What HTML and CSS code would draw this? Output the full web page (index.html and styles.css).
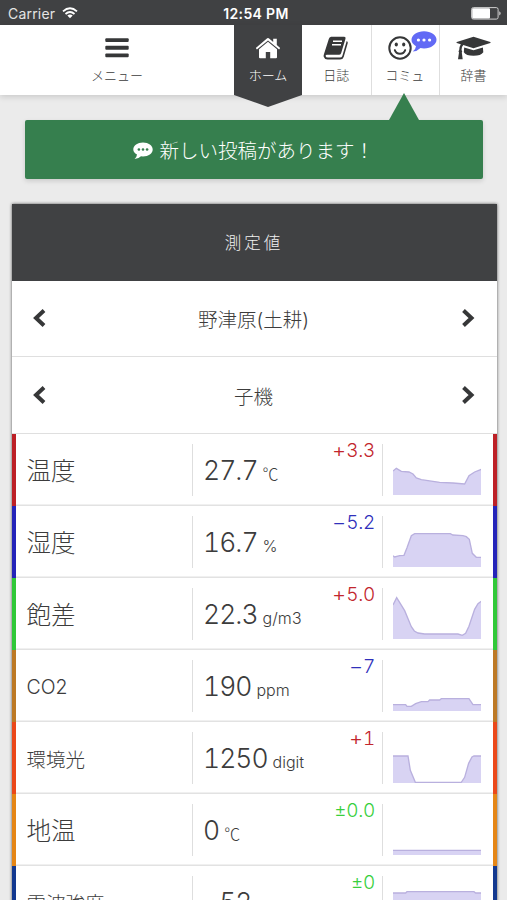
FILE: index.html
```html
<!DOCTYPE html>
<html lang="ja">
<head>
<meta charset="utf-8">
<title>測定値</title>
<link rel="stylesheet" href="styles.css">
</head>
<body>
<div class="status">
  <div class="carrier"><span>Carrier</span>
    <svg width="16" height="12" viewBox="0 0 16 12"><g fill="none" stroke="#fff" stroke-width="1.8"><path d="M1 4.3Q8 -1.9 15 4.3"/><path d="M3.5 7Q8 3 12.500 7"/></g><path d="M8 11.300 5.300 8.500Q8 6.300 10.700 8.500z" fill="#fff"/></svg>
  </div>
  <div class="clock">12:54 PM</div>
  <svg class="battery" width="31" height="13" viewBox="0 0 31 13"><rect x=".6" y=".6" width="26.500" height="11.500" rx="1.800" fill="none" stroke="#cfcfcf"/><rect x="1.200" y="1.200" width="17.800" height="10.300" rx="1" fill="#fff"/><path d="M28.300 4.200Q31 6.300 28.300 8.500z" fill="#ddd"/></svg>
</div>
<nav class="nav">
  <a class="tab menu"><svg width="24" height="24" viewBox="0 0 24 24" fill="#363738"><rect x=".3" y="2.200" width="23.400" height="3.900" rx="1"/><rect x=".3" y="9.800" width="23.400" height="3.900" rx="1"/><rect x=".3" y="17.400" width="23.400" height="3.900" rx="1"/></svg><span>メニュー</span></a>
  <a class="tab active"><svg width="26" height="24" viewBox="0 0 26 24" fill="#fff"><path d="M13 5.800 22 13.200V21.200Q22 22.200 21 22.200H15.200V16H10.800V22.200H5Q4 22.200 4 21.200V13.200z"/><path d="M.8 12 11.600 2.700Q13 1.500 14.400 2.700L18.200 6V2.800H21.800V9.100L25.200 12 24.100 13.400 13 4.400 1.900 13.400z"/></svg><span>ホーム</span></a>
  <a class="tab"><svg width="26" height="24" viewBox="0 0 26 24" fill="#363738"><path d="M8.100 .7H21.200Q23 .8 22.500 2.800L18.100 17.300Q17.500 18.800 16 18.800H4Q2.600 18.800 2.600 20 2.800 21.500 5 21.500H17Q18.800 21.500 19.300 20L23.700 4.900Q25.200 5.600 24.700 7.300L20.700 20.900Q19.800 23.600 17 23.600H4.500Q1.500 23.400 .7 20.700 .4 19.500 1 18L5.800 3Q6.300 1.100 8.100 .7z"/><path d="M10 5.300H19M9 8.700H18" stroke="#fff" stroke-width="1.500"/></svg><span>日誌</span></a>
  <a class="tab"><svg width="24" height="24" viewBox="0 0 24 24"><circle cx="12" cy="12" r="10.700" fill="none" stroke="#363738" stroke-width="2"/><ellipse cx="8.300" cy="8.600" rx="1.600" ry="2" fill="#363738"/><ellipse cx="15.700" cy="8.600" rx="1.600" ry="2" fill="#363738"/><path d="M6.800 14.100Q8 17.700 12 17.700T17.200 14.100" fill="none" stroke="#363738" stroke-width="1.900" stroke-linecap="round"/></svg><span>コミュ</span>
    <svg class="bubble" width="26" height="22" viewBox="0 0 26 22"><path d="M13 .2C20 .2 25.500 4 25.500 8.800S20 17.400 13 17.400Q11 17.400 9.500 17Q6.300 20.300 1.800 20.500 4.800 18 5 15.200 .5 12.800 .5 8.800C.5 4 6 .2 13 .2z" fill="#626af5"/><g fill="#fff"><circle cx="7.400" cy="9" r="1.600"/><circle cx="13" cy="9" r="1.600"/><circle cx="18.600" cy="9" r="1.600"/></g></svg></a>
  <a class="tab"><svg width="35" height="24" viewBox="0 0 35 24" fill="#363738"><path d="M17.500 .8 34.300 6.100Q35 6.500 34.300 7L17.500 12.200 7.300 9Q5.600 10.300 5.500 14 6.800 15 5.800 16.600L6.700 23.300H2L3 16.600Q1.900 15 3.200 14 3.300 10.400 4.800 8.200L.8 7Q0 6.500 .8 6.100z"/><path d="M8.200 11.400 17.500 14.300 26.900 11.400 27.300 16.200Q25 19.800 17.500 19.800T7.800 16.200z"/></svg><span>辞書</span></a>
</nav>
<main>
  <div class="notice"><svg width="20" height="18" viewBox="0 0 20 18"><path d="M10 .5C15.500 .5 19.700 3.500 19.700 7.500S15.500 14.400 10 14.400L8 14.300Q5.400 16.900 1.600 17.100 3.800 15.200 4 12.600 .3 10.700 .3 7.500C.3 3.500 4.500 .5 10 .5z" fill="#fff"/><g fill="#367f4e"><circle cx="5.900" cy="7.500" r="1.300"/><circle cx="10" cy="7.500" r="1.300"/><circle cx="14.100" cy="7.500" r="1.300"/></g></svg><span>新しい投稿があります！</span></div>
  <section class="card">
    <h1>測定値</h1>
    <div class="picker"><svg width="14" height="20" viewBox="0 0 14 20"><path d="M12 2.500 4 10 12 17.500"/></svg><span>野津原(土耕)</span><svg width="14" height="20" viewBox="0 0 14 20"><path d="M2.500 2.500 10.500 10 2.500 17.500"/></svg></div>
    <div class="picker"><svg width="14" height="20" viewBox="0 0 14 20"><path d="M12 2.500 4 10 12 17.500"/></svg><span>子機</span><svg width="14" height="20" viewBox="0 0 14 20"><path d="M2.500 2.500 10.500 10 2.500 17.500"/></svg></div>

    <div class="row red"><div class="name">温度</div><div class="reading"><b>27.7</b><i class="celsius">℃</i><em class="up"><s>+</s>3.3</em></div><svg class="chart" viewBox="0 0 265 153"><path d="M0 153V81L10 73 25 82 48 84 60 90 70 102 85 107 105 110 140 115 180 117 215 120 228 95 245 84 265 76V153z"/><polyline points="0,81 10,73 25,82 48,84 60,90 70,102 85,107 105,110 140,115 180,117 215,120 228,95 245,84 265,76"/></svg></div>
    <div class="row blue"><div class="name">湿度</div><div class="reading"><b>16.7</b><i>%</i><em class="down"><s>−</s>5.2</em></div><svg class="chart" viewBox="0 0 265 153"><path d="M0 153V119L5 123 20 119 33 118 42 95 55 59 65 53H172L180 57 210 59 220 62 229 70 238 112 250 124H265V153z"/><polyline points="0,119 5,123 20,119 33,118 42,95 55,59 65,53 172,53 180,57 210,59 220,62 229,70 238,112 250,124 265,124"/></svg></div>
    <div class="row green"><div class="name">飽差</div><div class="reading"><b>22.3</b><i>g/m3</i><em class="up"><s>+</s>5.0</em></div><svg class="chart" viewBox="0 0 265 153"><path d="M0 153V51L11 29 35 68 55 116 64 129 75 135 95 138H195L208 142 218 136 228 115 245 64 255 47 265 40V153z"/><polyline points="0,51 11,29 35,68 55,116 64,129 75,135 95,138 195,138 208,142 218,136 228,115 245,64 255,47 265,40"/></svg></div>
    <div class="row brown"><div class="name small">CO2</div><div class="reading"><b>190</b><i>ppm</i><em class="down"><s>−</s>7</em></div><svg class="chart" viewBox="0 0 265 153"><path d="M0 153V134H38L42 139H55L68 131 85 125H105L110 120H140L145 116H228L240 134H265V153z"/><polyline points="0,134 38,134 42,139 55,139 68,131 85,125 105,125 110,120 140,120 145,116 228,116 240,134 265,134"/></svg></div>
    <div class="row orange"><div class="name small">環境光</div><div class="reading"><b>1250</b><i>digit</i><em class="up"><s>+</s>1</em></div><svg class="chart" viewBox="0 0 265 153"><path d="M0 153V72H45L52 115 67 153H205L215 136 227 94 237 75 243 72H265V153z"/><polyline points="0,72 45,72 52,115 67,151 205,151 215,136 227,94 237,75 243,72 265,72"/></svg></div>
    <div class="row amber"><div class="name">地温</div><div class="reading"><b>0</b><i class="celsius">℃</i><em class="same">±0.0</em></div><svg class="chart" viewBox="0 0 265 153"><path d="M0 153V139H265V153z"/><polyline points="0,139 265,139"/></svg></div>
    <div class="row navy"><div class="name small">電波強度</div><div class="reading"><b>-52</b><em class="same">±0</em></div><svg class="chart" viewBox="0 0 265 153"><path d="M0 153V51H38L42 47H243L248 51H265V153z"/><polyline points="0,51 38,51 42,47 243,47 248,51 265,51"/></svg></div>
  </section>
</main>
</body>
</html>
```
FILE: styles.css
```css
* { box-sizing: border-box; }
body {
  margin: 0;
  height: 900px;
  overflow: hidden;
  background: #ebebeb;
  color: #3c3c3c;
  font-family: Inter, "Noto Sans CJK JP", sans-serif;
  font-weight: 300;
}
.status {
  height: 25px;
  padding: 1px 5px 0 8px;
  background: #404143;
  color: #fff;
  display: grid;
  grid-template-columns: 1fr auto 1fr;
  align-items: center;
  font-size: 14px;
}
.carrier { display: flex; align-items: center; gap: 7px; font-weight: 400; color: #e4e4e4; letter-spacing: .2px; }
.clock { font-weight: 600; font-size: 14px; letter-spacing: .35px; margin-left: 2px; }
.battery { justify-self: end; }
.nav {
  position: relative;
  height: 70px;
  display: grid;
  grid-template-columns: 234px 68px 68.500px 68.500px 68px;
  grid-template-rows: 70px;
  background: #fff;
  box-shadow: 0 2px 6px rgba(0, 0, 0, .14);
}
.tab {
  display: flex;
  flex-direction: column;
  align-items: center;
  position: relative;
  padding-top: 10.500px;
  border-left: 1px solid #dedede;
  font-size: 13px;
  line-height: 18px;
}
.tab svg { flex: none; }
.tab span { margin-top: 6px; }
.tab.menu { border-left: 0; }
.tab:nth-child(3) { border-left: 0; }
.tab.active {
  height: 82px;
  border: 0;
  background: #404143;
  color: #fff;
  clip-path: polygon(0 0, 100% 0, 100% 70px, 50% 100%, 0 70px);
}
.tab .bubble { position: absolute; left: 39px; top: 6px; }
.tab:nth-child(4) > svg:first-child { margin-right: 10px; }
.tab:nth-child(4) span { margin-right: 1px; }
main { padding: 24.500px 10.500px 0 11.500px; }
.notice {
  position: relative;
  z-index: 2;
  height: 59.500px;
  margin: 0 14px 25px 13.500px;
  border-radius: 2px;
  background: #367f4e;
  color: #fff;
  display: flex;
  align-items: center;
  justify-content: center;
  gap: 6px;
  font-size: 19.500px;
  box-shadow: 0 2px 5px rgba(0, 0, 0, .14);
}
.notice svg { position: relative; top: 2px; }
.notice::before {
  content: "";
  position: absolute;
  left: 364px;
  bottom: 100%;
  border: solid transparent;
  border-width: 0 15px 27px;
  border-bottom-color: #367f4e;
}
.card { background: #fff; box-shadow: 0 0 3px rgba(0, 0, 0, .65); }
h1 {
  margin: 0;
  height: 76.500px;
  padding-bottom: 1px;
  background: #404143;
  color: #f0f0f0;
  display: flex;
  align-items: center;
  justify-content: center;
  font-size: 16.500px;
  font-weight: 300;
  letter-spacing: 3px;
}
.picker {
  height: 76.800px;
  padding: 0 21px 0 20px;
  display: flex;
  align-items: center;
  justify-content: space-between;
  border-bottom: 1px solid #dfdfdf;
  font-size: 19.500px;
}
.picker path { fill: none; stroke: #363738; stroke-width: 4; }
.row {
  height: 72.050px;
  padding: 9.500px 11px 10px;
  display: grid;
  grid-template-columns: 165.500px 191px 88.500px;
  border: solid var(--tone);
  border-width: 0 4px;
  box-shadow: inset 0 -1.500px #e2e2e2;
}
.red { --tone: #bd2026; }
.blue { --tone: #2424b9; }
.green { --tone: #30c838; }
.brown { --tone: #bd7925; }
.orange { --tone: #eb481a; }
.amber { --tone: #e58616; }
.navy { --tone: #12388f; }
.name { display: flex; align-items: center; padding-bottom: 1px; font-size: 24.500px; }
.name.small { padding: 1px 0 0; font-size: 19.500px; }
.reading {
  position: relative;
  height: 52px;
  padding-left: 10px;
  border: solid #dedede;
  border-width: 0 1px;
  line-height: 53px;
  white-space: nowrap;
  font-variant-numeric: tabular-nums;
}
.reading b { font-size: 26.500px; font-weight: 300; letter-spacing: -1px; }
.reading i { margin-left: 5px; font-size: 16px; font-style: normal; }
.reading .celsius { font-family: "Noto Sans CJK JP", sans-serif; line-height: 1; }
.reading em { position: absolute; right: 7px; top: -2.500px; font-size: 19px; line-height: 20px; font-style: normal; letter-spacing: -.3px; }
.reading s { display: inline-block; margin-right: 1px; text-decoration: none; transform: scaleX(1.15); }
.up { color: #c2262d; }
.down { color: #3030bb; }
.same { color: #38cf3d; }
.chart { margin-left: 10px; width: 88.300px; height: 51px; }
.chart path { fill: #d8d3f3; }
.chart polyline { fill: none; stroke: #b9b0de; stroke-width: 4; }
```
